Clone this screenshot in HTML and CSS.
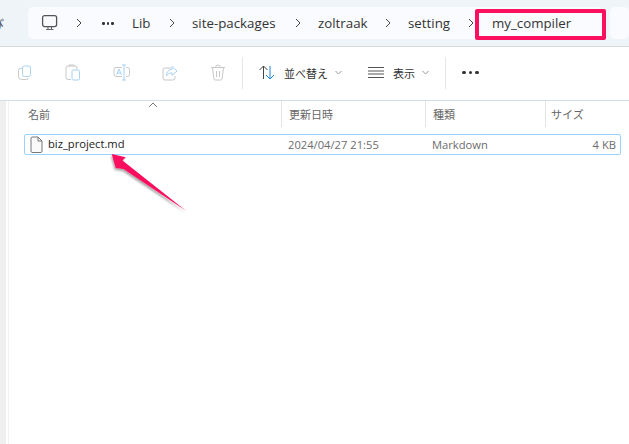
FILE: index.html
```html
<!DOCTYPE html>
<html lang="ja">
<head>
<meta charset="utf-8">
<title>my_compiler</title>
<link rel="stylesheet" href="styles.css">
</head>
<body>
<header class="addressbar">
  <span class="edge-glyph">び</span>
  <nav class="crumbs">
    <svg class="pc" width="18" height="18" viewBox="0 0 18 18"><rect x="1.600" y="1.600" width="14" height="11" rx="2" fill="none" stroke="#555" stroke-width="1.300"/><path d="M5 15.500h7.500M7 13v2M10.500 13v2" stroke="#666" stroke-width="1.100" fill="none"/></svg>
    <svg class="chev c1" width="6" height="10" viewBox="0 0 6 10"><path d="M1 1l4 4-4 4" fill="none" stroke="#444" stroke-width="1"/></svg>
    <div class="dots"><i></i><i></i><i></i></div>
    <span class="crumb lib">Lib</span>
    <svg class="chev c2" width="6" height="10" viewBox="0 0 6 10"><path d="M1 1l4 4-4 4" fill="none" stroke="#444" stroke-width="1"/></svg>
    <span class="crumb sp">site-packages</span>
    <svg class="chev c3" width="6" height="10" viewBox="0 0 6 10"><path d="M1 1l4 4-4 4" fill="none" stroke="#444" stroke-width="1"/></svg>
    <span class="crumb zo">zoltraak</span>
    <svg class="chev c4" width="6" height="10" viewBox="0 0 6 10"><path d="M1 1l4 4-4 4" fill="none" stroke="#444" stroke-width="1"/></svg>
    <span class="crumb se">setting</span>
    <svg class="chev c5" width="6" height="10" viewBox="0 0 6 10"><path d="M1 1l4 4-4 4" fill="none" stroke="#444" stroke-width="1"/></svg>
    <span class="crumb my">my_compiler</span>
  </nav>
  <div class="search"></div>
  <div class="highlight"></div>
</header>
<section class="toolbar">
  <div class="tools">
    <svg width="16" height="16" viewBox="0 0 16 16" fill="none"><rect x="5.500" y="1" width="8" height="10.500" rx="2" stroke="#a6d2f5"/><path d="M5 3.500H3.500A2 2 0 0 0 1.500 5.500v6a3 3 0 0 0 3 3h5a2 2 0 0 0 2-1.500" stroke="#c8c8c8"/></svg>
    <svg width="16" height="17" viewBox="0 0 16 17" fill="none"><path d="M6 15.500H3a2 2 0 0 1-2-2V4a2 2 0 0 1 2-2h7a2 2 0 0 1 2 2v1" stroke="#c8c8c8"/><path d="M4 2.500V1h5v1.500" stroke="#c8c8c8"/><rect x="7" y="6" width="7.500" height="10" rx="1.500" stroke="#a6d2f5"/></svg>
    <svg width="17" height="17" viewBox="0 0 17 17" fill="none"><path d="M9 3.500H3a2 2 0 0 0-2 2v5a2 2 0 0 0 2 2h6M13 3.500h1.500a2 2 0 0 1 2 2v5a2 2 0 0 1-2 2H13" stroke="#c8c8c8"/><path d="M3.500 11l2.500-6 2.500 6M4.500 9h3M11 1v15M9 1h4M9 16h4" stroke="#a6d2f5"/></svg>
    <svg width="16" height="16" viewBox="0 0 16 16" fill="none"><path d="M9 3H3a2 2 0 0 0-2 2v8a2 2 0 0 0 2 2h8a2 2 0 0 0 2-2v-2" stroke="#c8c8c8"/><path d="M10 1.500l5 4.500-5 4.500V8c-3 0-4.500 1-5.500 3 0-4 2-6.500 5.500-6.500z" stroke="#a6d2f5"/></svg>
    <svg width="16" height="17" viewBox="0 0 16 17" fill="none"><path d="M1 3.500h14M2.500 3.500l1.300 11a1.500 1.500 0 0 0 1.500 1.500h5.400a1.500 1.500 0 0 0 1.500-1.500l1.300-11M5.500 3.500a2.500 2.500 0 0 1 5 0M6.500 7v6M9.500 7v6" stroke="#c8c8c8"/></svg>
  </div>
  <div class="sep"></div>
  <div class="menu sort">
    <svg width="16" height="15" viewBox="0 0 16 15" fill="none"><path d="M4.500 14V1M.5 5l4-4 4 4" stroke="#444" stroke-width="1"/><path d="M11 1v13M7 10l4 4 4-4" stroke="#1a86dc" stroke-width="1"/></svg>
    <span class="label">並べ替え</span>
    <svg class="caret" width="7" height="5" viewBox="0 0 7 5"><path d="M.5 1l3 3 3-3" fill="none" stroke="#999"/></svg>
  </div>
  <div class="menu view">
    <svg width="16" height="11" viewBox="0 0 16 11"><path d="M0 .5h16M0 4h16M0 7h16M0 10.500h16" stroke="#555" fill="none"/></svg>
    <span class="label">表示</span>
    <svg class="caret" width="7" height="5" viewBox="0 0 7 5"><path d="M.5 1l3 3 3-3" fill="none" stroke="#999"/></svg>
  </div>
  <div class="sep"></div>
  <div class="more"><i></i><i></i><i></i></div>
</section>
<main class="content">
  <aside class="gutter"></aside>
  <div class="list">
    <div class="heads">
      <svg class="sortup" width="10" height="6" viewBox="0 0 10 6"><path d="M1 5l4-4 4 4" fill="none" stroke="#777"/></svg>
      <div class="col name">名前</div>
      <div class="col date">更新日時</div>
      <div class="col type">種類</div>
      <div class="col size">サイズ</div>
    </div>
    <div class="row">
      <div class="cell name">
        <svg width="13" height="17" viewBox="0 0 13 17"><path d="M1 2a1.500 1.500 0 0 1 1-1h6l4 4v10a1.500 1.500 0 0 1-1 1.500H2A1.500 1.500 0 0 1 1 15z" fill="#fafafa" stroke="#777"/><path d="M8 1v4h4" fill="none" stroke="#777"/></svg>
        <span>biz_project.md</span>
      </div>
      <div class="cell date">2024/04/27 21:55</div>
      <div class="cell type">Markdown</div>
      <div class="cell size">4 KB</div>
    </div>
  </div>
  <svg class="arrow" width="90" height="70" viewBox="0 0 90 70"><defs><filter id="sh" x="-20%" y="-20%" width="150%" height="150%"><feDropShadow dx="-1" dy="2" stdDeviation="1.200" flood-color="#000" flood-opacity=".35"/></filter></defs><path d="M1.700 1L15.700 4.300 12.500 7.500 76 57.700 13.500 16 5.700 15z" fill="#fb0f5f" filter="url(#sh)"/></svg>
</main>
</body>
</html>
```
FILE: styles.css
```css
* { box-sizing: border-box; }
html, body { margin: 0; height: 100%; }
body {
  width: 629px;
  height: 444px;
  overflow: hidden;
  background: #fff;
  position: relative;
  font-family: "Noto Sans CJK JP", "Noto Sans", sans-serif;
  color: #333;
}
.addressbar {
  height: 47px;
  background: #eff4f9;
  border-bottom: 1px solid #d6dade;
  position: relative;
  display: flex;
  padding: 7px 0 0 28px;
  gap: 8px;
}
.edge-glyph {
  position: absolute;
  left: -9px;
  top: 15px;
  font-size: 13px;
  line-height: 18px;
  color: #555;
}
.crumbs {
  width: 589px;
  height: 32px;
  background: #f9fbfe;
  border-radius: 5px;
  position: relative;
  font-family: "Open Sans", "Noto Sans", sans-serif;
  font-size: 13.300px;
  line-height: 32px;
  color: #333;
}
.crumbs > * { position: absolute; }
.pc { left: 13px; top: 7px; }
.chev { top: 11px; }
.c1 { left: 48px; }
.c2 { left: 141px; }
.c3 { left: 267px; }
.c4 { left: 357px; }
.c5 { left: 440px; }
.dots { left: 74px; top: 15px; display: flex; gap: 2px; }
.dots i { width: 2.500px; height: 2.500px; border-radius: 50%; background: #333; }
.lib { left: 104px; }
.sp { left: 164px; }
.zo { left: 290px; }
.se { left: 380px; }
.my { left: 464px; }
.search {
  width: 20px;
  height: 32px;
  background: #f9fbfe;
  border-radius: 5px;
}
.highlight {
  position: absolute;
  left: 475px;
  top: 9px;
  width: 131px;
  height: 31px;
  border: 4px solid #fb0f5f;
  border-radius: 2px;
}
.toolbar {
  height: 54px;
  display: flex;
  align-items: center;
  padding: 0 0 2px 17px;
  border-bottom: 1px solid #d3dde6;
}
.tools {
  display: flex;
  align-items: center;
  gap: 32px;
  width: 225px;
}
.sep { width: 1px; height: 32px; background: #e6e6e6; }
.menu {
  display: flex;
  align-items: center;
  font-size: 11px;
  color: #333;
}
.sort { margin-left: 16px; width: 109px; }
.view { width: 77px; }
.label { margin-left: 9px; line-height: 16px; }
.caret { margin-left: 7px; }
.more {
  display: flex;
  gap: 3px;
  margin-left: 16px;
}
.more i {
  width: 3.500px;
  height: 3.500px;
  border-radius: 50%;
  background: #333;
}
.content {
  display: flex;
  height: 343px;
  position: relative;
}
.gutter {
  width: 9px;
  background: linear-gradient(to right, #f0f0f0 6px, #fff 6px, #fff 8px, #f2f2f2 8px);
}
.list { flex: 1; position: relative; }
.heads {
  display: flex;
  height: 26px;
  font-size: 11px;
  color: #666;
  line-height: 26px;
}
.sortup { position: absolute; left: 139px; top: 1px; }
.col { border-right: 1px solid #e3e3e3; padding-left: 7px; }
.col.size { border-right: 0; }
.name.col { width: 273px; padding-left: 19px; }
.date.col { width: 144px; }
.type.col { width: 120px; }
.size.col { width: 78px; padding-left: 5px; }
.row {
  display: flex;
  align-items: center;
  margin: 7px 0 0 15px;
  width: 597px;
  height: 21px;
  border: 1px solid #99d1ff;
  border-radius: 2px;
  font-family: "Open Sans", "Noto Sans", sans-serif;
  font-size: 11.200px;
  line-height: 17px;
  color: #6d6d6d;
}
.cell.name {
  display: flex;
  align-items: center;
  gap: 5px;
  width: 263px;
  padding-left: 5px;
  color: #222;
}
.cell.name span { position: relative; top: -1px; }
.cell.date { width: 144px; }
.cell.type { width: 116px; }
.cell.size { width: 68px; text-align: right; }
.arrow {
  position: absolute;
  left: 110px;
  top: 52px;
}
```
